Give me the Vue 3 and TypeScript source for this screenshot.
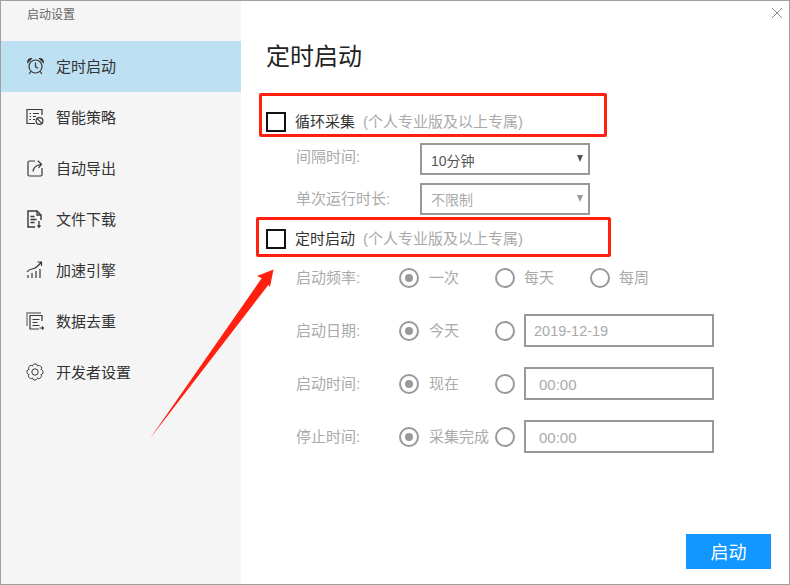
<script setup lang="ts">
const navItems = [
  { label: '定时启动', icon: 'clock', active: true },
  { label: '智能策略', icon: 'policy', active: false },
  { label: '自动导出', icon: 'export', active: false },
  { label: '文件下载', icon: 'file', active: false },
  { label: '加速引擎', icon: 'speed', active: false },
  { label: '数据去重', icon: 'dedupe', active: false },
  { label: '开发者设置', icon: 'gear', active: false },
]
const schedule = [
  { label: '启动频率:', first: '一次', kind: 'freq', value: '' },
  { label: '启动日期:', first: '今天', kind: 'date', value: '2019-12-19' },
  { label: '启动时间:', first: '现在', kind: 'time', value: '00:00' },
  { label: '停止时间:', first: '采集完成', kind: 'time', value: '00:00' },
]

function buildGear(): string {
  const lobes = 8
  const parts: string[] = []
  for (let i = 0; i < lobes; i++) {
    const step = (Math.PI * 2) / lobes
    const a = i * step - Math.PI / 2 - step / 2
    const point = (r: number, t: number) =>
      `${(9 + r * Math.cos(t)).toFixed(2)} ${(9 + r * Math.sin(t)).toFixed(2)}`
    parts.push(`${i === 0 ? 'M' : 'L'}${point(6.4, a)}`)
    parts.push(`C${point(8.9, a + step * 0.12)} ${point(9.4, a + step * 0.88)} ${point(6.4, a + step)}`)
  }
  return parts.join(' ') + 'Z'
}
const gearPath = buildGear()
</script>

<template>
  <div class="window">
    <aside class="side">
      <div class="side-title">启动设置</div>
      <div v-for="item in navItems" :key="item.label" class="nav" :class="{ active: item.active }">
        <svg class="nav-icon" viewBox="0 0 18 18" fill="none" stroke="#383838" stroke-width="1.2">
          <template v-if="item.icon === 'clock'">
            <circle cx="9.500" cy="9.500" r="6.500" />
            <path d="M9.500 5.500v4.300l2.500 1.500M1.800 5.500C1.500 3 3 1.500 5.300 1.700ZM17.200 5.500C17.500 3 16 1.500 13.700 1.700ZM4.800 14.500l-1.600 2.300M14.200 14.500l1.600 2.300" />
          </template>
          <template v-else-if="item.icon === 'policy'">
            <path d="M16 7V1.500H1v14h8" />
            <path d="M3.500 5.500h1.500M7 5.500h6M3.500 8.500h1.500M7 8.500h3M3.500 11.500h1.500M7 11.500h2" />
            <circle cx="13.500" cy="13" r="3.400" />
            <path d="m11.200 10.700 4.600 4.600" />
          </template>
          <template v-else-if="item.icon === 'export'">
            <path d="M9 2H3.500Q2 2 2 3.500v12Q2 17 3.500 17h11q1.500 0 1.500-1.500V9" />
            <path d="M7 12.500C7.500 8.500 10 6 15 5.500M11.800 1.800 15.500 5.300l-3 3.500" />
          </template>
          <template v-else-if="item.icon === 'file'">
            <path d="M9 17H2V1h9l4 4v5" stroke-width="1.400" />
            <path d="M11 1v4h4M4.500 6.500h4M4.500 9.500h6M4.500 12.500h4M13 11v6M11.500 15.500l1.500 1.700 1.500-1.700" stroke-width="1.300" />
          </template>
          <template v-else-if="item.icon === 'speed'">
            <path d="M1 11C3 8 6 8 8 7.500S12 5 15 1.500M11.500 1H15.500v4M2 17v-3M6 17v-5M10 17v-7M14 17V8" />
          </template>
          <template v-else-if="item.icon === 'dedupe'">
            <path d="M1 14V1h14" stroke="#999" stroke-width="1.800" />
            <path d="M16 9V3.500H4v13.500h9" />
            <path d="M6.500 7.500h7M6.500 10.500h5M6.500 13.500h7M13.500 16h4M16 14.500l1.500 1.500-1.500 1.500" />
          </template>
          <template v-else>
            <path :d="gearPath" stroke-width="1" />
            <circle cx="9" cy="9" r="3.200" stroke-width="1" />
          </template>
        </svg>
        <span>{{ item.label }}</span>
      </div>
    </aside>

    <main class="main">
      <button class="close" type="button" aria-label="关闭">
        <svg viewBox="0 0 12 12" width="12" height="12" fill="none" stroke="#888" stroke-width="1">
          <path d="M1 1l10 10M11 1 1 11" />
        </svg>
      </button>
      <h1 class="title">定时启动</h1>

      <label class="check-row first">
        <span class="box"></span>
        <span class="check-name">循环采集</span>
        <span class="check-note">(个人专业版及以上专属)</span>
      </label>
      <div class="field">
        <span class="field-label">间隔时间:</span>
        <div class="select"><span>10分钟</span><i class="caret"></i></div>
      </div>
      <div class="field second">
        <span class="field-label">单次运行时长:</span>
        <div class="select disabled"><span>不限制</span><i class="caret"></i></div>
      </div>

      <label class="check-row">
        <span class="box"></span>
        <span class="check-name">定时启动</span>
        <span class="check-note">(个人专业版及以上专属)</span>
      </label>

      <div class="schedule">
        <div v-for="row in schedule" :key="row.label" class="sched-row">
          <span class="sched-label">{{ row.label }}</span>
          <span class="radio on"></span>
          <span class="radio-text lead">{{ row.first }}</span>
          <span class="radio"></span>
          <template v-if="row.kind === 'freq'">
            <span class="radio-text">每天</span>
            <span class="radio"></span>
            <span class="radio-text">每周</span>
          </template>
          <div v-else class="text-input" :class="row.kind">{{ row.value }}</div>
        </div>
      </div>

      <button class="start" type="button">启动</button>
    </main>

    <div class="mark mark-a"></div>
    <div class="mark mark-b"></div>
    <svg class="arrow" viewBox="0 0 790 585" width="790" height="585">
      <polygon points="150,438.500 261.700,278.300 257,276 273.500,269.500 270,287 268.300,285" fill="#ff2010" />
    </svg>
  </div>
</template>

<style>
html, body { margin: 0; background: #fff; }
</style>

<style scoped>
.window {
  position: relative;
  box-sizing: border-box;
  width: 790px;
  height: 585px;
  display: flex;
  border: 1px solid #a0a0a0;
  background: #fff;
  overflow: hidden;
  font-family: "Liberation Sans", "Noto Sans CJK SC", sans-serif;
}
.side {
  width: 240px;
  flex: none;
  background: #f5f5f5;
}
.side-title {
  height: 40px;
  padding-left: 26px;
  box-sizing: border-box;
  padding-top: 6px;
  font-size: 12px;
  line-height: 16px;
  color: #666;
}
.nav {
  box-sizing: border-box;
  height: 51px;
  display: flex;
  align-items: center;
  padding-left: 25px;
  padding-bottom: 2px;
  gap: 12px;
  font-size: 15px;
  color: #333;
}
.nav.active { background: #bde0f3; }
.nav-icon { width: 18px; height: 18px; flex: none; }
.main {
  position: relative;
  flex: 1;
  padding-left: 25px;
  min-width: 0;
}
.close {
  position: absolute;
  top: 6px;
  right: 6px;
  padding: 0;
  border: 0;
  background: none;
  line-height: 0;
}
.title {
  margin: 0;
  padding-top: 38px;
  font-size: 24px;
  line-height: 36px;
  height: 34px;
  font-weight: 400;
  color: #222;
}
.check-row {
  display: flex;
  align-items: center;
  height: 20px;
  font-size: 15px;
}
.check-row.first { margin-top: 39px; }
.box {
  box-sizing: border-box;
  width: 20px;
  height: 20px;
  border: 2px solid #111;
  background: #fff;
  margin-right: 9px;
}
.check-name { color: #333; margin-right: 8px; padding-bottom: 4px; }
.check-note { color: #aaa; padding-bottom: 4px; }
.field {
  display: flex;
  align-items: center;
  height: 32px;
  margin-top: 11px;
  padding-left: 30px;
}
.field.second { margin-top: 8px; }
.field-label {
  width: 124px;
  font-size: 15px;
  color: #aaa;
  padding-bottom: 8px;
}
.field.second .field-label { padding-bottom: 4px; }
.select {
  box-sizing: border-box;
  position: relative;
  width: 170px;
  height: 32px;
  border: 2px solid #999;
  padding: 7px 9px 0;
  font-size: 14px;
  line-height: 18px;
  color: #555;
}
.select.disabled { color: #aaa; padding-top: 6px; }
.caret {
  position: absolute;
  right: 5px;
  top: 10px;
  width: 0;
  height: 0;
  border-left: 3px solid transparent;
  border-right: 3px solid transparent;
  border-top: 7px solid #555;
}
.select.disabled .caret { border-top-color: #999; }
.field.second + .check-row { margin-top: 14px; }
.schedule {
  margin-top: 12px;
  padding-left: 30px;
  display: flex;
  flex-direction: column;
}
.sched-row {
  display: flex;
  align-items: center;
  height: 33px;
  margin-bottom: 20px;
  font-size: 15px;
  color: #aaa;
}
.sched-label { width: 103px; flex: none; padding-bottom: 2px; }
.radio {
  box-sizing: border-box;
  position: relative;
  width: 20px;
  height: 20px;
  flex: none;
  border: 2px solid #999;
  border-radius: 50%;
}
.radio.on::after {
  content: "";
  position: absolute;
  left: 4px;
  top: 4px;
  width: 8px;
  height: 8px;
  border-radius: 50%;
  background: #999;
}
.radio-text {
  width: 66px;
  padding: 0 0 2px 9px;
  box-sizing: border-box;
  white-space: nowrap;
  flex: none;
  margin-right: 9px;
}
.radio-text.lead { width: 67px; padding-left: 10px; }
.text-input {
  box-sizing: border-box;
  width: 190px;
  height: 33px;
  margin-left: 9px;
  border: 2px solid #999;
  line-height: 31px;
  color: #aaa;
}
.text-input.date { padding-left: 8px; font-size: 14.5px; }
.text-input.time { padding-left: 13px; font-size: 15px; }
.start {
  position: absolute;
  right: 18px;
  bottom: 15px;
  width: 85px;
  height: 35px;
  border: 0;
  padding: 0 0 2px;
  background: #1296ff;
  color: #fff;
  font: inherit;
  font-size: 18px;
}
.mark {
  position: absolute;
  box-sizing: border-box;
  border: 3px solid #ff2010;
  border-radius: 2px;
  pointer-events: none;
}
.mark-a { left: 258px; top: 92px; width: 348px; height: 44px; }
.mark-b { left: 255px; top: 216px; width: 355px; height: 40px; }
.arrow { position: absolute; left: -1px; top: -1px; pointer-events: none; }
</style>
